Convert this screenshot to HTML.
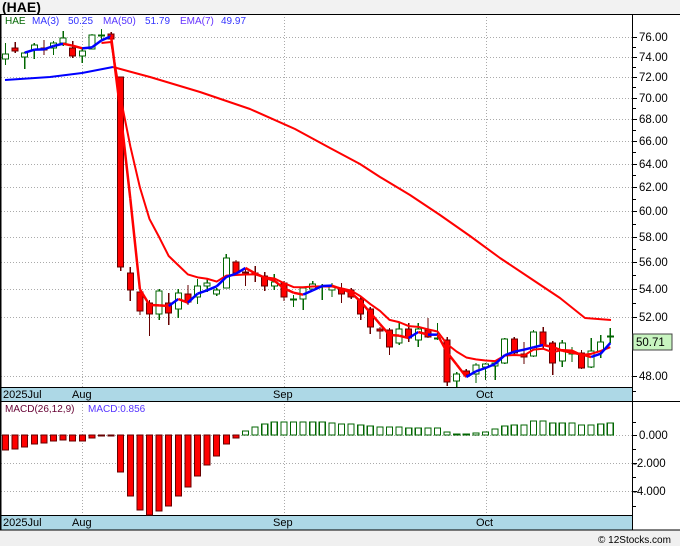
<!DOCTYPE html>
<html><head><meta charset="utf-8"><style>
html,body{margin:0;padding:0;width:680px;height:546px;overflow:hidden;background:#fff;font-family:"Liberation Sans",sans-serif}
svg text{font-family:"Liberation Sans","DejaVu Sans",sans-serif}
</style></head><body>
<svg id="s" width="680" height="546" viewBox="0 0 680 546" xmlns="http://www.w3.org/2000/svg" shape-rendering="crispEdges">
<rect x="0" y="0" width="680" height="14" fill="#f2f2f2"/>
<rect x="0" y="530" width="680" height="16" fill="#f0f0f0"/>
<text x="2" y="12" font-size="14" font-weight="bold" fill="#000">(HAE)</text>
<g id="grid" stroke="#aaa" stroke-dasharray="1,2" stroke-width="1"></g>
<rect x="0" y="387" width="632" height="14" fill="#add8e6"/>
<rect x="0" y="515" width="632" height="15" fill="#add8e6"/>
<g stroke="#000" stroke-width="1.3">
<line x1="0" y1="14.5" x2="680" y2="14.5"/>
<line x1="0" y1="387.5" x2="632" y2="387.5"/>
<line x1="0" y1="401.5" x2="680" y2="401.5"/>
<line x1="0" y1="515.5" x2="632" y2="515.5"/>
<line x1="0" y1="530" x2="680" y2="530"/>
<line x1="632.5" y1="14" x2="632.5" y2="530"/>
<line x1="0.8" y1="14" x2="0.8" y2="530"/>
</g>
<g font-size="11" fill="#000">
<text x="3" y="398">2025Jul</text><text x="72" y="398">Aug</text><text x="273" y="398">Sep</text><text x="476" y="398">Oct</text>
<text x="3" y="526">2025Jul</text><text x="72" y="526">Aug</text><text x="273" y="526">Sep</text><text x="476" y="526">Oct</text>
</g>
<g id="ax" font-size="11.5" fill="#000"></g>
<g id="mac"></g>
<g id="cand"></g>
<g id="lines" fill="none" stroke-width="2" shape-rendering="auto" stroke-linejoin="round"></g>
<rect x="633" y="334" width="39" height="16" fill="#c8f5c0" stroke="#444" stroke-width="0.6"/>
<text x="636" y="346" font-size="11.5" fill="#000">50.71</text>
<g font-size="10">
<text x="5" y="24" fill="#006600">HAE</text>
<text x="32" y="24" fill="#3333ff">MA(3)</text>
<text x="68" y="24" fill="#3333ff">50.25</text>
<text x="103" y="24" fill="#5533ff">MA(50)</text>
<text x="145" y="24" fill="#3333ff">51.79</text>
<text x="180" y="24" fill="#6633ff">EMA(7)</text>
<text x="221" y="24" fill="#3333ff">49.97</text>
<text x="5" y="412" fill="#660033">MACD(26,12,9)</text>
<text x="88" y="412" fill="#5533ff">MACD:0.856</text>
</g>
<text x="598" y="543" font-size="10" fill="#000">© 12Stocks.com</text>
</svg>
<script>
var NS="http://www.w3.org/2000/svg";
function el(p,t,a){var e=document.createElementNS(NS,t);for(var k in a)e.setAttribute(k,a[k]);p.appendChild(e);return e;}
var grid=document.getElementById('grid'),ax=document.getElementById('ax');
var lv=[[76,37],[74,57],[72,77],[70,98],[68,119],[66,141],[64,164],[62,187],[60,211],[58,237],[56,262],[54,289],[52,317],[48,376]];
lv.forEach(function(l){el(grid,'line',{x1:1,y1:l[1]+.5,x2:632,y2:l[1]+.5});el(ax,'line',{x1:632,y1:l[1]+.5,x2:637,y2:l[1]+.5,stroke:'#000'});var t=el(ax,'text',{x:639,y:l[1]+4});t.textContent=l[0].toFixed(2);});
[47,67,87,108,130,152,175,199,224,249,275,303,346,391].forEach(function(y){el(ax,'line',{x1:632,y1:y+.5,x2:636,y2:y+.5,stroke:'#000'});});
[[0,435],[-2,463],[-4,491]].forEach(function(l){el(grid,'line',{x1:1,y1:l[1]+.5,x2:632,y2:l[1]+.5});el(ax,'line',{x1:632,y1:l[1]+.5,x2:637,y2:l[1]+.5,stroke:'#000'});var t=el(ax,'text',{x:l[0]?633:639,y:l[1]+4});t.textContent=(l[0]?'-':'')+Math.abs(l[0]).toFixed(3);});
[422,449,477,506].forEach(function(y){el(ax,'line',{x1:632,y1:y+.5,x2:636,y2:y+.5,stroke:'#000'});});
[82,284,486].forEach(function(x){el(grid,'line',{x1:x+.5,y1:14,x2:x+.5,y2:530});});
var C=[[59,54,43,65],[48,51,42,53],[57,53,52,69],[50,45,43,59],[48,50,40,55],[48,43,41,55],[43,38,31,46],[48,56,41,58],[56,51,47,63],[49,35,34,49],[36,35,29,40],[34,39,32,39],
[77,267,77,271],[273,290,267,301],[292,311,290,315],[303,314,300,336],[314,291,289,320],[303,313,293,325],[309,293,289,318],[294,302,285,305],[297,286,279,304],[286,283,278,292],[294,290,288,296],
[288,258,254,288],[262,273,260,274],[272,273,268,286],[273,274,266,282],[276,286,272,291],[286,282,274,290],[283,297,281,301],[299,299,295,307],[299,288,287,310],[289,284,281,290],[286,286,284,300],[290,287,283,297],[289,294,283,303],[290,297,288,299],[299,314,297,320],[309,327,307,334],[329,331,327,339],[330,347,328,355],[343,329,323,345],[329,338,323,342],[340,329,323,347],[330,337,318,338],[338,338,323,340],[340,382,337,386],
[381,374,372,387],[371,375,369,377],[374,365,363,383],[367,364,363,380],[366,363,361,380],[363,339,338,364],[339,353,337,355],[354,357,342,364],[356,332,330,357],[332,346,327,348],[343,363,341,375],[361,343,340,367],[354,352,347,362],[353,368,350,369],[367,351,338,368],[351,342,335,358],[336,336,328,343]];
var cg=document.getElementById('cand');
function X(i){return 5.5+9.6*i;}
C.forEach(function(c,i){var x=X(i),red=c[1]>c[0],col=red?'#660000':'#006600';
el(cg,'line',{x1:x,y1:c[2],x2:x,y2:c[3],stroke:col,'stroke-width':1.3});
var t=Math.min(c[0],c[1]),h=Math.max(Math.abs(c[1]-c[0]),1);
el(cg,'rect',{x:x-3,y:t,width:6,height:h,fill:red?'#ff0000':'#fff',stroke:col,'stroke-width':1});});
var M=[450,449,447,444,443,441,440,441,441,438,436,436,472,496,510,515,511,506,496,487,476,465,456,444,438,431,427,424,422,422,422,422,422,422,423,424,424,425,426,427,427,427,428,428,428,428,432,434,434,433,432,429,426,425,425,421,421,423,423,423,425,425,424,423];
var mg=document.getElementById('mac');
M.forEach(function(v,i){var x=X(i);if(v>435)el(mg,'rect',{x:x-3,y:435,width:6,height:v-435,fill:'#ff0000',stroke:'#660000','stroke-width':1});
else el(mg,'rect',{x:x-3,y:v,width:6,height:435-v,fill:'#fff',stroke:'#006600','stroke-width':1.2});});
var lg=document.getElementById('lines');
function pl(pts,col){el(lg,'polyline',{points:pts.map(function(p){return p[0]+','+p[1]}).join(' '),stroke:col});}
pl([[5,80],[50,77],[82,73],[113,67]],'#0000ff');
pl([[113,67],[150,77],[200,92],[250,109],[295,129],[330,148],[360,164],[380,177],[410,195],[440,215],[470,236],[500,258],[530,278],[560,298],[585,318],[611,320]],'#ff0000');
var e=C[0][1],E=[];C.forEach(function(c,i){e=i?e+(c[1]-e)*0.25:c[1];E.push([X(i),e]);});
pl(E.slice(10),'#ff0000');
var m=[];for(var i=2;i<C.length;i++){m.push([X(i),(C[i][1]+C[i-1][1]+C[i-2][1])/3]);}
for(var j=1;j<m.length;j++){el(lg,'line',{x1:m[j-1][0],y1:m[j-1][1],x2:m[j][0],y2:m[j][1],stroke:m[j][1]>m[j-1][1]?'#ff0000':'#0000ff','stroke-width':2.5});}
</script>
</body></html>
